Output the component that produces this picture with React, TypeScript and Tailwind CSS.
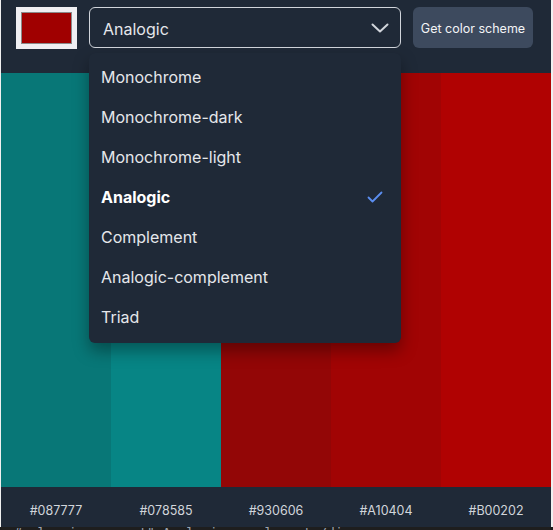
import React from "react";

const colors = ["#087777", "#078585", "#930606", "#A10404", "#B00202"];
const modes = [
    "Monochrome",
    "Monochrome-dark",
    "Monochrome-light",
    "Analogic",
    "Complement",
    "Analogic-complement",
    "Triad",
];

const Chevron = () => (
    <svg width="18" height="10" viewBox="0 0 18 10" fill="none" stroke="#d1d5db" strokeWidth="2" strokeLinecap="round" strokeLinejoin="round">
        <path d="M1.5 1.5 9 8.5l7.5-7" />
    </svg>
);

const Check = () => (
    <svg width="16" height="12" viewBox="0 0 16 12" fill="none" stroke="#5b8ef0" strokeWidth="1.8" strokeLinecap="round" strokeLinejoin="round">
        <path d="M1.5 6.5 5.5 10.5 14.5 1.5" />
    </svg>
);

const App = () => {
    const selected = "Analogic";
    return (
        <div className="w-[553px] h-[530px] overflow-hidden bg-[#f0f0f0] flex flex-col" style={{ fontFamily: "Inter, 'Noto Sans', sans-serif" }}>
            <div className="flex flex-col ml-px mr-[2px] h-[527px] bg-[#1f2937] relative">
                <header className="h-[73px] shrink-0 flex items-start gap-3 pt-[7px] pl-[15px]">
                    <div className="w-[61px] h-[42px] bg-[#efeff2] p-[5px]">
                        <div className="w-full h-full bg-[#a00000] border border-[#8a8a8a]" />
                    </div>
                    <div className="w-[312px] h-[41px] border border-[#d1d5db] rounded-md flex items-center justify-between pl-[13px] pr-[11px]">
                        <span className="text-[16px] text-[#e5e7eb] pt-[3px]">{selected}</span>
                        <Chevron />
                    </div>
                    <button className="w-[120px] h-[41px] rounded-md bg-[#3d4a5e] text-[12.5px] text-[#f3f4f6] pt-[3px]">
                        Get color scheme
                    </button>
                </header>

                <div className="flex-1 flex">
                    {colors.map((c) => (
                        <div key={c} className="flex-1" style={{ backgroundColor: c }} />
                    ))}
                </div>

                <div className="h-10 shrink-0 flex items-center">
                    {colors.map((c) => (
                        <div key={c} className="flex-1 text-center text-[12.5px] text-[#d1d5db] pt-[9px]">
                            {c}
                        </div>
                    ))}
                </div>

                <ul className="absolute left-[88px] top-[53px] w-[312px] bg-[#1f2937] rounded-md py-1 pb-[6px] shadow-[0_8px_16px_rgba(0,0,0,0.35)]">
                    {modes.map((m) => (
                        <li key={m} className="h-10 flex items-center justify-between pl-3 pr-[18px]">
                            <span className={m === selected ? "text-[16px] font-bold text-white" : "text-[16px] text-[#e5e7eb]"}>{m}</span>
                            {m === selected && <Check />}
                        </li>
                    ))}
                </ul>
            </div>
            <div className="h-[3px] bg-[#1e1e1e] overflow-hidden">
                <div className="text-[13px] leading-[13px] text-[#9ca3af] whitespace-pre pl-[14px] -mt-[1px]" style={{ fontFamily: "'DejaVu Sans Mono', monospace" }}>
                    {"#color-is-current\">Analogic-complement</div>"}
                </div>
            </div>
        </div>
    );
};

export default App;
